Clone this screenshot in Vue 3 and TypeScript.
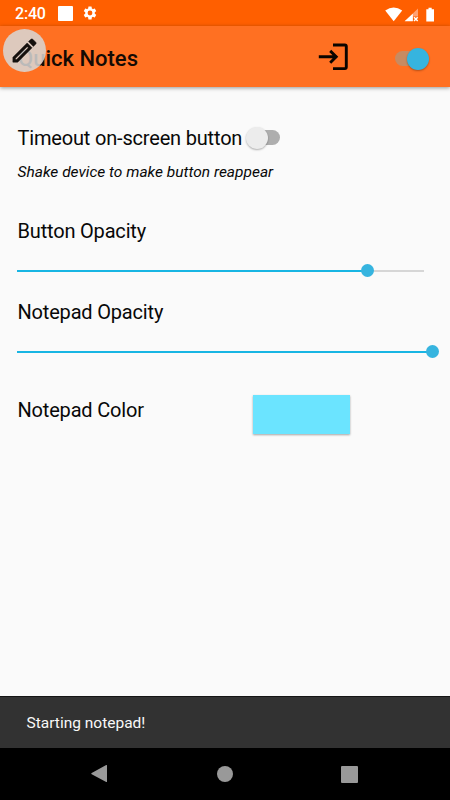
<script setup lang="ts">
import { ref } from 'vue'

interface Slider {
  label: string
  value: number
  full: boolean
}

const timeout = ref(false)
const enabled = ref(true)
const sliders = ref<Slider[]>([
  { label: 'Button Opacity', value: 350, full: false },
  { label: 'Notepad Opacity', value: 415, full: true },
])
</script>

<template>
  <div class="screen">
    <header class="status">
      <span class="clock">2:40</span>
      <i class="square"></i>
      <svg class="gear" viewBox="0 0 24 24" width="16" height="16">
        <path fill="#fff" d="M19.14 12.94c.04-.3.06-.61.06-.94 0-.32-.02-.64-.07-.94l2.03-1.58a.49.49 0 0 0 .12-.61l-1.92-3.32a.488.488 0 0 0-.59-.22l-2.39.96c-.5-.38-1.03-.7-1.62-.94l-.36-2.54a.484.484 0 0 0-.48-.41h-3.84c-.24 0-.43.17-.47.41l-.36 2.54c-.59.24-1.13.57-1.62.94l-2.39-.96c-.22-.08-.47 0-.59.22L2.74 8.87c-.12.21-.08.47.12.61l2.03 1.58c-.05.3-.09.63-.09.94s.02.64.07.94l-2.03 1.58a.49.49 0 0 0-.12.61l1.92 3.32c.12.22.37.29.59.22l2.39-.96c.5.38 1.03.7 1.62.94l.36 2.54c.05.24.24.41.48.41h3.84c.24 0 .44-.17.47-.41l.36-2.54c.59-.24 1.13-.56 1.62-.94l2.39.96c.22.08.47 0 .59-.22l1.92-3.32c.12-.22.07-.47-.12-.61l-2.01-1.58zM12 15.6A3.6 3.6 0 1 1 12 8.400a3.600 3.600 0 0 1 0 7.200z" />
      </svg>
      <svg class="signals" viewBox="0 0 52 18" width="52" height="18">
        <path fill="#fff" d="M.2 4.600Q8.700-1.400 17.200 4.600L8.700 15.200z" />
        <path fill="#ffa070" d="M33 2.500v8h-5v4.500H20z" />
        <path fill="#fff" d="M27.800 7.700V15.200H19.600z" />
        <path stroke="#fff" stroke-width="1.500" d="m29 11.300 3.700 3.700m0-3.700L29 15" />
        <path fill="#fff" d="M41.300 3.200h2.200V1.700h3.200v1.500H49v12.300h-7.700z" />
      </svg>
    </header>

    <div class="appbar">
      <h1>Quick Notes</h1>
      <svg class="exit" viewBox="0 0 32 30" width="32" height="30" fill="none" stroke="#0a0500" stroke-width="2.900">
        <path d="M16 3h11.800q1.500 0 1.500 1.500v20.600q0 1.500-1.500 1.500H16" />
        <path d="M1.800 14.800H20m-6.800-5.900L19.200 14.800l-6 5.900" />
      </svg>
      <button class="switch" :class="{ on: enabled }" aria-label="Enable" @click="enabled = !enabled"></button>
      <button class="floating" aria-label="Open notepad">
        <svg viewBox="0 0 24 24" width="31" height="31">
          <path fill="#15100d" stroke="#15100d" stroke-width=".4" d="M14.060 9.020l.92.92L5.920 19H5v-.92l9.060-9.060M17.660 3c-.25 0-.51.1-.7.290l-1.830 1.830 3.750 3.750 1.830-1.830c.39-.39.39-1.020 0-1.410l-2.340-2.340c-.2-.2-.45-.29-.71-.29zm-3.600 3.190L3 17.250V21h3.750L17.810 9.940l-3.750-3.750z" />
        </svg>
      </button>
    </div>

    <main>
      <div class="row">
        <span class="label timeout-label">Timeout on-screen button</span>
        <button class="switch" :class="{ on: timeout }" aria-label="Timeout" @click="timeout = !timeout"></button>
      </div>
      <p class="hint">Shake device to make button reappear</p>
      <section v-for="s in sliders" :key="s.label" class="setting">
        <div class="label">{{ s.label }}</div>
        <div class="track" :class="{ full: s.full }">
          <div class="fill" :style="{ width: s.value + 'px' }"></div>
          <i class="thumb"></i>
        </div>
      </section>
      <div class="color-row">
        <span class="label">Notepad Color</span>
        <button class="swatch" aria-label="Notepad color"></button>
      </div>
    </main>

    <div class="snackbar">Starting notepad!</div>
    <nav>
      <svg viewBox="0 0 18 20" width="18" height="20"><path fill="#999" d="M.7 9.100 15.200 1q.8-.3.800.5v16q0 .8-.8.500L.7 10.200q-.8-.5 0-1.100z" /></svg>
      <i class="home"></i>
      <i class="recent"></i>
    </nav>
  </div>
</template>

<style>
body {
  margin: 0;
}
</style>

<style scoped>
.screen {
  width: 450px;
  height: 800px;
  display: flex;
  flex-direction: column;
  overflow: hidden;
  background: #fafafa;
  color: #080808;
  font-family: Roboto, sans-serif;
}
button {
  border: 0;
  padding: 0;
}
.status {
  height: 26px;
  flex: none;
  display: flex;
  align-items: center;
  background: #ff5f00;
  color: #fff;
}
.clock {
  width: 43px;
  margin-left: 15px;
  padding-top: 2px;
  font-size: 16px;
  font-weight: 500;
  line-height: 20px;
  letter-spacing: -.2px;
}
.square {
  width: 15px;
  height: 15px;
  border-radius: 1px;
  background: #fff;
}
.gear {
  margin-left: 9px;
}
.signals {
  margin: 4px 0 0 auto;
  padding-right: 13px;
}
.appbar {
  position: relative;
  z-index: 1;
  height: 61px;
  flex: none;
  display: flex;
  align-items: center;
  background: #ff7022;
  box-shadow: 0 1px 4px rgba(0, 0, 0, .4);
}
h1 {
  width: 299px;
  margin: 4px 0 0 18px;
  font-size: 22px;
  font-weight: 500;
  line-height: 28px;
  color: #140a04;
}
.exit {
  margin-top: 1px;
}
.switch {
  position: relative;
  width: 34px;
  height: 24px;
  background: none;
}
.switch::before {
  content: '';
  position: absolute;
  inset: 4px 0 5px 3px;
  border-radius: 8px;
  background: #aeaeae;
}
.switch::after {
  content: '';
  position: absolute;
  left: 0;
  top: 1px;
  width: 22px;
  height: 22px;
  border-radius: 50%;
  background: #ececec;
  box-shadow: 0 1px 2px rgba(0, 0, 0, .3);
}
.switch.on::before {
  background: #c78b62;
}
.switch.on::after {
  left: 12px;
  background: #36b4df;
}
.appbar .switch {
  margin: 4px 0 0 46px;
}
.appbar .switch::before {
  left: 0;
}
.floating {
  position: absolute;
  left: 3px;
  top: 3px;
  width: 43px;
  height: 43px;
  border-radius: 50%;
  display: flex;
  align-items: center;
  justify-content: center;
  background: rgba(215, 215, 215, .86);
}
main {
  flex: 1;
  padding: 37px 17px 0;
}
.row {
  height: 28px;
  display: flex;
  align-items: center;
}
.label {
  padding-left: .5px;
  font-size: 20px;
  line-height: 28px;
  letter-spacing: -.18px;
}
.timeout-label {
  box-sizing: border-box;
  width: 229px;
  white-space: nowrap;
}
.hint {
  margin: 10px 0 35px;
  padding-left: .5px;
  font-size: 15.500px;
  line-height: 20px;
  font-style: italic;
}
.setting {
  height: 81px;
}
.track {
  width: 407px;
  height: 13px;
  margin-top: 19px;
  display: flex;
  align-items: center;
  background: linear-gradient(#d6d6d6, #d6d6d6) center / 100% 2px no-repeat;
}
.track.full {
  width: 422px;
  background: none;
}
.fill {
  height: 2px;
  background: #18b5e3;
}
.thumb {
  width: 13px;
  height: 13px;
  margin-left: -6px;
  flex: none;
  border-radius: 50%;
  background: #36b4df;
}
.color-row {
  display: flex;
  align-items: flex-start;
  margin-top: 16px;
}
.color-row .label {
  box-sizing: border-box;
  width: 236px;
  padding-top: 1px;
}
.swatch {
  width: 97px;
  height: 39px;
  background: #6be4ff;
  box-shadow: 0 1px 2px rgba(0, 0, 0, .35);
}
.snackbar {
  height: 52px;
  flex: none;
  box-sizing: border-box;
  padding-left: 26.500px;
  border-top: 1px solid #151515;
  background: #323232;
  color: #f8f8f8;
  font-size: 15.500px;
  line-height: 52px;
}
nav {
  height: 52px;
  flex: none;
  box-sizing: border-box;
  padding: 0 92px 0 91px;
  display: flex;
  align-items: center;
  justify-content: space-between;
  background: #000;
}
.home {
  width: 16px;
  height: 16px;
  border-radius: 50%;
  background: #999;
}
.recent {
  width: 17px;
  height: 17px;
  border-radius: 1px;
  background: #999;
}
</style>
